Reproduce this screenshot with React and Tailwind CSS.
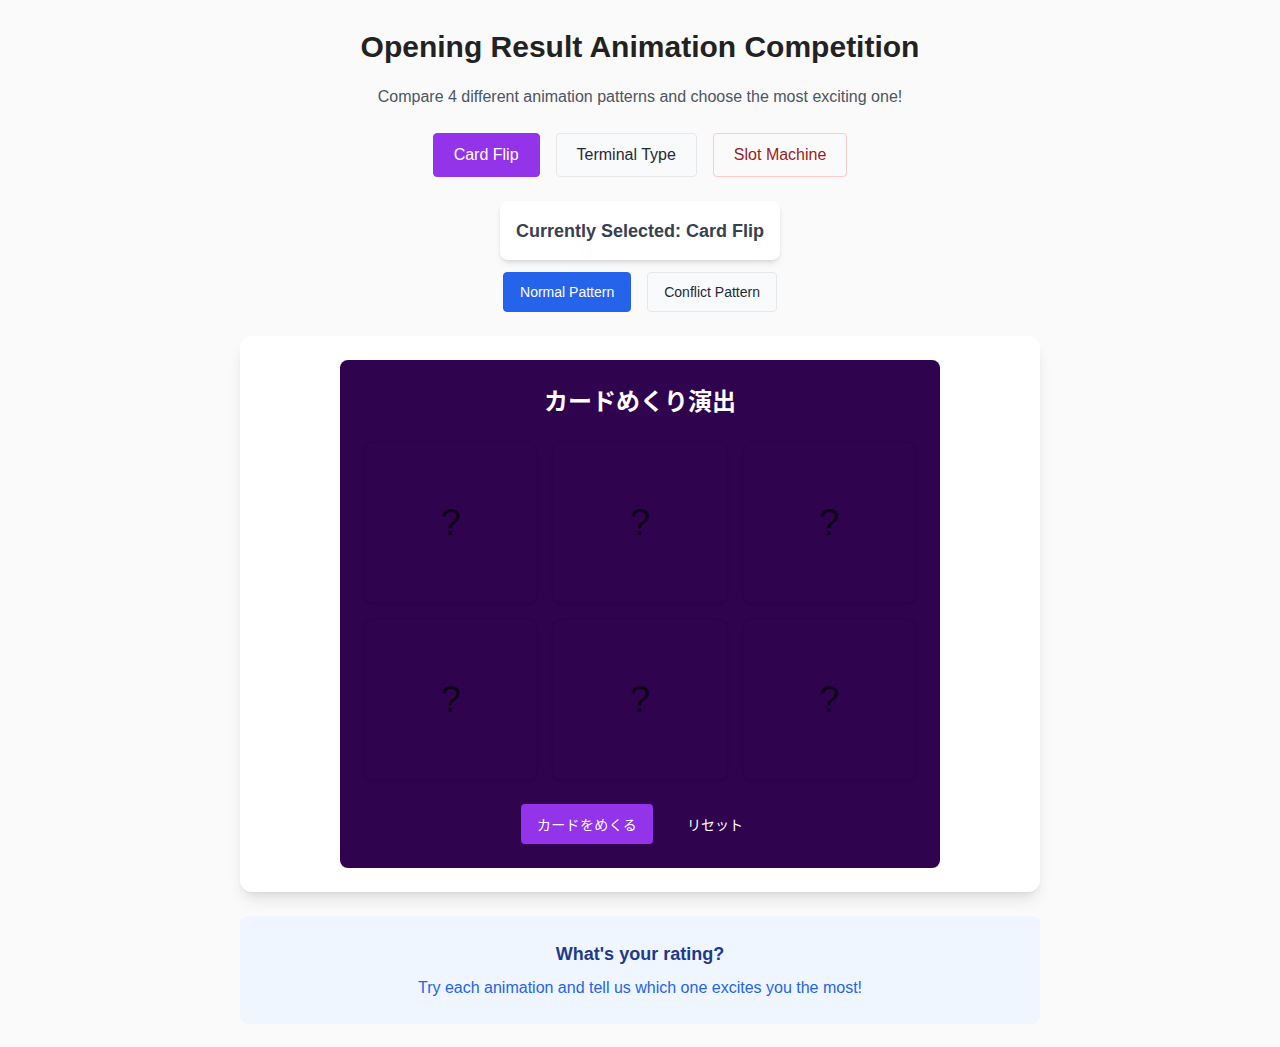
const tabs = [
  { label: 'Card Flip', cls: 'bg-[#9333ea] text-white border-[#9333ea]' },
  { label: 'Terminal Type', cls: 'bg-[#f9fafb] text-[#1f2937] border-[#e5e7eb]' },
  { label: 'Slot Machine', cls: 'bg-[#fafafa] text-[#991b1b] border-[#fecaca]' },
];

const App = () => {
  return (
    <div className="min-h-[1047px] bg-[#fafafa] pt-[29px] pb-6 font-['Liberation_Sans',Arial,sans-serif]">
      <div className="max-w-[800px] mx-auto">
        <h1 className="text-3xl font-bold text-center text-[#222222] leading-9">
          Opening Result Animation Competition
        </h1>
        <p className="mt-5 text-center text-base leading-6 text-[#4b5563]">
          Compare 4 different animation patterns and choose the most exciting one!
        </p>

        {/* Animation tabs */}
        <div className="mt-6 flex justify-center gap-4">
          {tabs.map((t) => (
            <button key={t.label} className={`h-11 px-5 rounded border text-base ${t.cls}`}>
              {t.label}
            </button>
          ))}
        </div>

        <div className="mt-6 flex justify-center">
          <div className="h-[59px] flex items-center bg-white rounded-lg shadow-md px-4 text-lg leading-7 font-bold text-[#374151]">
            Currently Selected: Card Flip
          </div>
        </div>

        <div className="mt-3 flex justify-center gap-4">
          <button className="h-10 px-4 rounded bg-[#2563eb] text-white text-sm border border-[#2563eb]">
            Normal Pattern
          </button>
          <button className="h-10 px-4 rounded bg-[#f9fafb] text-[#1f2937] text-sm border border-[#e5e7eb]">
            Conflict Pattern
          </button>
        </div>

        {/* Stage */}
        <div className="mt-6 bg-white rounded-xl shadow-lg p-6">
          <div className="max-w-[600px] mx-auto bg-[#30034f] rounded-lg p-6 font-['Noto_Sans_CJK_JP','Liberation_Sans',sans-serif]">
            <h2 className="text-center text-2xl leading-8 font-bold text-white">カードめくり演出</h2>
            <div className="mt-[26px] grid grid-cols-3 gap-4">
              {[0, 1, 2, 3, 4, 5].map((i) => (
                <div
                  key={i}
                  className="h-[161px] rounded-lg bg-[#30034f] border border-black/5 shadow-sm flex items-center justify-center"
                >
                  <span className="text-4xl text-[#0b0014] font-['Liberation_Sans',Arial,sans-serif]">?</span>
                </div>
              ))}
            </div>
            <div className="mt-6 flex justify-center gap-[18px]">
              <button className="h-10 px-4 rounded bg-[#9333ea] text-white text-sm tracking-wide">
                カードをめくる
              </button>
              <button className="h-10 px-4 rounded text-white text-sm">リセット</button>
            </div>
          </div>
        </div>

        {/* Rating */}
        <div className="mt-6 bg-[#eff6ff] rounded-lg p-6 text-center">
          <h3 className="text-lg leading-7 font-bold text-[#1e3a8a]">What's your rating?</h3>
          <p className="mt-2 text-base leading-6 text-[#2563eb]">
            Try each animation and tell us which one excites you the most!
          </p>
        </div>
      </div>
    </div>
  );
};

export default App;
